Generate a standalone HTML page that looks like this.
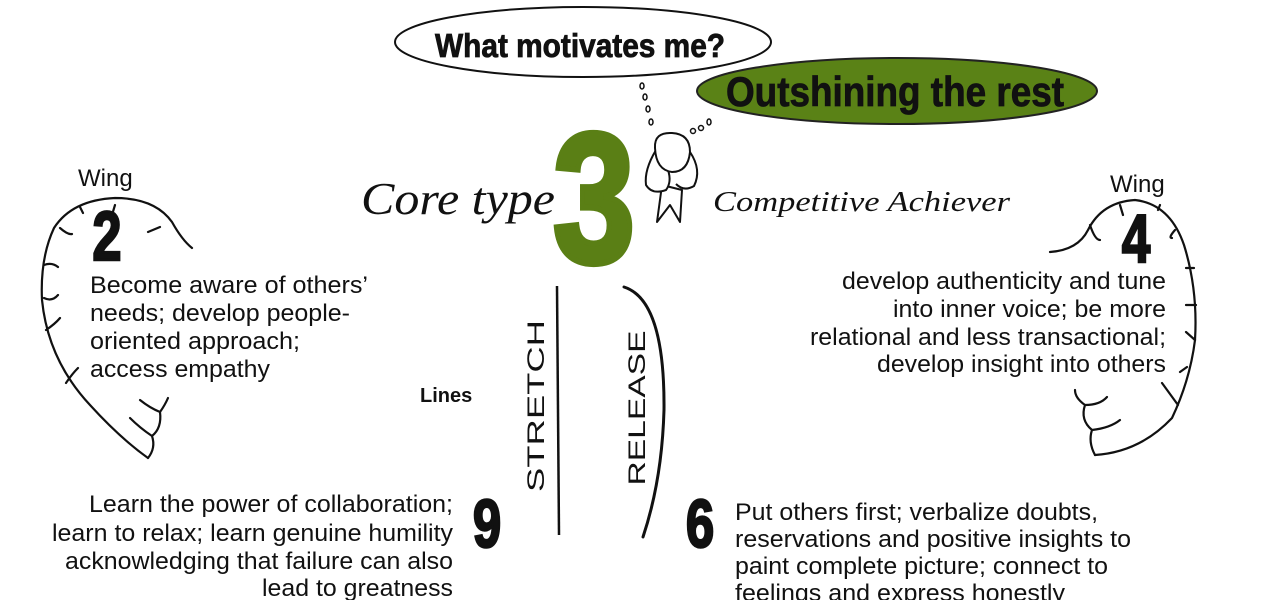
<!DOCTYPE html>
<html><head><meta charset="utf-8"><style>
html,body{margin:0;padding:0;background:#fff;width:1280px;height:600px;overflow:hidden}
svg{display:block}
.t{font-family:"Liberation Sans",sans-serif;font-size:24px;fill:#111}
.d{font-family:"Liberation Sans",sans-serif;font-weight:bold;fill:#111}
.h{font-family:"Liberation Serif",serif;font-style:italic;fill:#111}
</style></head><body>
<svg width="1280" height="600" viewBox="0 0 1280 600" xmlns="http://www.w3.org/2000/svg">
<ellipse cx="583" cy="42" rx="188" ry="35" fill="#fff" stroke="#111" stroke-width="2"/>
<text x="580" y="57" text-anchor="middle" class="d" font-size="33" stroke="#111" stroke-width="0.8" textLength="290" lengthAdjust="spacingAndGlyphs">What motivates me?</text>
<ellipse cx="897" cy="91" rx="200" ry="33" fill="#5a8216" stroke="#222" stroke-width="2"/>
<text x="895" y="106" text-anchor="middle" class="d" font-size="42" stroke="#111" stroke-width="0.8" textLength="338" lengthAdjust="spacingAndGlyphs">Outshining the rest</text>
<g fill="none" stroke="#111" stroke-width="1.5">
<ellipse cx="642" cy="86" rx="2" ry="3"/><ellipse cx="645" cy="97" rx="2" ry="3"/><ellipse cx="648" cy="109" rx="2" ry="3"/><ellipse cx="651" cy="122" rx="2" ry="3"/>
<ellipse cx="693" cy="131" rx="2.5" ry="2.5"/><ellipse cx="701" cy="128" rx="2.5" ry="2.5"/><ellipse cx="709" cy="122" rx="2" ry="3"/>
</g>
<g fill="#fff" stroke="#111" stroke-width="2" stroke-linejoin="round">
<path d="M662 185 L657 222 L670 205 L680 222 L682 190 Z"/>
<path d="M656 150 Q644 170 646 185 Q652 195 666 190 Q672 182 668 170 M690 152 Q702 170 694 186 Q684 192 676 184"/>
<path d="M655 148 Q654 132 672 133 Q690 134 690 152 Q688 172 672 172 Q656 170 655 148 Z"/>
</g>
<text x="361" y="214" class="h" font-size="46" textLength="194" lengthAdjust="spacingAndGlyphs">Core type</text>
<text transform="translate(594,262) scale(0.8,1)" text-anchor="middle" class="d" font-size="185" fill="#5a7f15" style="fill:#5a7f15;stroke:#5a7f15;stroke-width:6">3</text>
<text x="713" y="211" class="h" font-size="28" textLength="297" lengthAdjust="spacingAndGlyphs">Competitive Achiever</text>
<g fill="none" stroke="#111" stroke-width="2.2" stroke-linecap="round" stroke-linejoin="round">
<path d="M192 248 Q182 240 172 222 Q155 198 115 198 Q72 200 54 228 Q40 258 42 300 Q48 360 90 405 Q120 438 148 458"/>
<path d="M148 458 Q156 448 152 436 Q162 428 160 412 M160 412 Q150 408 140 400 M152 436 Q140 428 130 418 M160 412 Q165 405 168 398"/>
<path d="M60 228 Q68 235 72 234 M44 265 Q52 262 58 267 M44 298 Q52 302 58 295 M46 330 Q55 324 60 318 M66 383 Q72 374 78 368 M80 207 L83 213 M115 205 L112 215 M148 232 L160 227"/>
</g>
<text x="78" y="186" class="t" font-size="22">Wing</text>
<text transform="translate(107,260) scale(0.75,1)" text-anchor="middle" class="d" font-size="70" stroke="#111" stroke-width="2.5">2</text>
<text class="t"><tspan x="90" y="293" textLength="278" lengthAdjust="spacingAndGlyphs">Become aware of others’</tspan><tspan x="90" y="321" textLength="260" lengthAdjust="spacingAndGlyphs">needs; develop people-</tspan><tspan x="90" y="349" textLength="210" lengthAdjust="spacingAndGlyphs">oriented approach;</tspan><tspan x="90" y="377" textLength="180" lengthAdjust="spacingAndGlyphs">access empathy</tspan></text>
<g fill="none" stroke="#111" stroke-width="2.2" stroke-linecap="round" stroke-linejoin="round">
<path d="M1050 252 Q1078 250 1088 230 Q1102 202 1135 200 Q1170 204 1184 245 Q1198 290 1195 340 Q1190 380 1172 418 Q1140 452 1095 455"/>
<path d="M1095 455 Q1088 442 1092 430 Q1080 420 1085 405 Q1075 398 1075 390 M1085 405 Q1100 405 1107 397 M1092 430 Q1110 428 1120 420"/>
<path d="M1090 225 Q1095 240 1100 240 M1120 205 L1123 215 M1160 205 L1158 210 M1175 230 Q1168 238 1172 238 M1186 268 L1194 268 M1186 305 L1196 305 M1186 332 L1195 340 M1180 372 L1187 367 M1162 383 L1178 405"/>
</g>
<text x="1110" y="192" class="t" font-size="22">Wing</text>
<text transform="translate(1136,262) scale(0.75,1)" text-anchor="middle" class="d" font-size="68" stroke="#111" stroke-width="2.5">4</text>
<text class="t" text-anchor="end"><tspan x="1166" y="289" textLength="324" lengthAdjust="spacingAndGlyphs">develop authenticity and tune</tspan><tspan x="1166" y="317" textLength="273" lengthAdjust="spacingAndGlyphs">into inner voice; be more</tspan><tspan x="1166" y="345" textLength="356" lengthAdjust="spacingAndGlyphs">relational and less transactional;</tspan><tspan x="1166" y="372" textLength="289" lengthAdjust="spacingAndGlyphs">develop insight into others</tspan></text>
<text x="420" y="402" class="d" font-size="20">Lines</text>
<line x1="557" y1="286" x2="559" y2="535" stroke="#111" stroke-width="2.5"/>
<path d="M624 287 Q665 300 664 410 Q662 480 643 537" fill="none" stroke="#111" stroke-width="3" stroke-linecap="round"/>
<text transform="translate(544,406) rotate(-90)" text-anchor="middle" class="t" font-size="40" textLength="172" lengthAdjust="spacingAndGlyphs">STRETCH</text>
<text transform="translate(645,408) rotate(-90)" text-anchor="middle" class="t" font-size="40" textLength="155" lengthAdjust="spacingAndGlyphs">RELEASE</text>
<text transform="translate(487,547) scale(0.75,1)" text-anchor="middle" class="d" font-size="68" stroke="#111" stroke-width="2.5">9</text>
<text class="t" text-anchor="end"><tspan x="453" y="512" textLength="364" lengthAdjust="spacingAndGlyphs">Learn the power of collaboration;</tspan><tspan x="453" y="541" textLength="401" lengthAdjust="spacingAndGlyphs">learn to relax; learn genuine humility</tspan><tspan x="453" y="569" textLength="388" lengthAdjust="spacingAndGlyphs">acknowledging that failure can also</tspan><tspan x="453" y="596" textLength="191" lengthAdjust="spacingAndGlyphs">lead to greatness</tspan></text>
<text transform="translate(700,547) scale(0.75,1)" text-anchor="middle" class="d" font-size="68" stroke="#111" stroke-width="2.5">6</text>
<text class="t"><tspan x="735" y="520" textLength="363" lengthAdjust="spacingAndGlyphs">Put others first; verbalize doubts,</tspan><tspan x="735" y="547" textLength="396" lengthAdjust="spacingAndGlyphs">reservations and positive insights to</tspan><tspan x="735" y="574" textLength="373" lengthAdjust="spacingAndGlyphs">paint complete picture; connect to</tspan><tspan x="735" y="601" textLength="330" lengthAdjust="spacingAndGlyphs">feelings and express honestly</tspan></text>
</svg>
</body></html>
